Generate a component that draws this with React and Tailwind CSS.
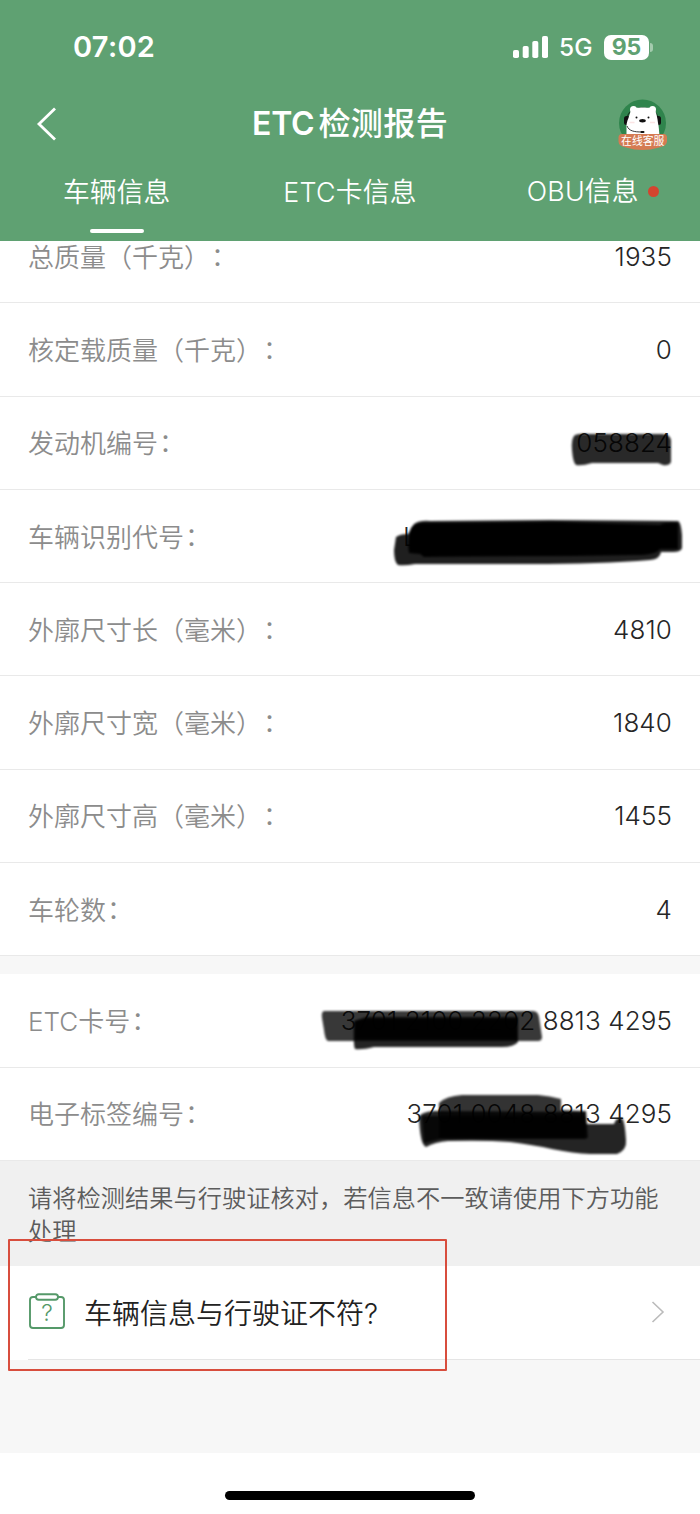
const vehicleRows = [
  { label: '总质量（千克）', value: '1935' },
  { label: '核定载质量（千克）', value: '0' },
  { label: '发动机编号', value: '058824' },
  { label: '车辆识别代号', value: 'L', valueClass: 'w-[269px]' },
  { label: '外廓尺寸长（毫米）', value: '4810' },
  { label: '外廓尺寸宽（毫米）', value: '1840' },
  { label: '外廓尺寸高（毫米）', value: '1455' },
  { label: '车轮数', value: '4' },
]

const cardRows = [
  { label: 'ETC卡号', value: '3701 2100 2202 8813 4295' },
  { label: '电子标签编号', value: '3701 0048 8813 4295' },
]

function StatusBar() {
  return (
    <div className="flex h-[94px] items-center justify-between pl-[73px] pr-[47px]">
      <span className="text-[29px] font-semibold tracking-[0.3px]">07:02</span>
      <div className="flex items-center">
        <svg width="36" height="24" viewBox="0 0 36 24" fill="#fff">
          <rect x="0" y="15" width="6" height="8" rx="1.8" />
          <rect x="9.7" y="11" width="6" height="12" rx="1.8" />
          <rect x="19.3" y="6" width="6" height="17" rx="1.8" />
          <rect x="29" y="1" width="6" height="22" rx="1.8" />
        </svg>
        <span className="ml-[10px] w-[35px] text-[24.5px] font-[450]">5G</span>
        <div className="ml-[10px] flex h-[25px] w-[45px] items-center justify-center rounded-[7px] bg-white text-[23px] font-bold text-[#5fa172]">
          95
        </div>
        <div className="ml-[1px] h-[9px] w-[3px] rounded-r-full bg-[#a4cbae]" />
      </div>
    </div>
  )
}

function ServiceBadge() {
  return (
    <svg className="mt-[2px]" width="50" height="54" viewBox="0 0 50 54">
      <circle cx="24.5" cy="25" r="23.5" fill="#2f844c" />
      <path d="M9 21C10 6 39 6 40 21" fill="none" stroke="#173a23" strokeWidth="1.2" />
      <rect x="6" y="18" width="6" height="9" rx="2.5" fill="#111" />
      <rect x="37" y="18" width="6" height="9" rx="2.5" fill="#111" />
      <circle cx="15.5" cy="11.5" r="3.5" fill="#fff" />
      <circle cx="34.5" cy="11.5" r="3.5" fill="#fff" />
      <path d="M13 12C15 8.500 35 8.500 37 12C38.500 16 39.500 20 40 25C41 29 41 33 41.500 38H8.500V31C8 27 9 23 10.500 20Z" fill="#fff" />
      <circle cx="18.5" cy="19.5" r="1" fill="#111" />
      <circle cx="30.5" cy="19.5" r="1" fill="#111" />
      <ellipse cx="24.5" cy="22.7" rx="3.3" ry="1.7" fill="#111" />
      <path d="M11.500 24.500h5M32 24.500h5" stroke="#fbe4e4" strokeWidth="1.6" />
      <path d="M9 28C11 33 16 34 24 34" fill="none" stroke="#222" strokeWidth="0.9" />
      <rect x="22.5" y="33" width="4" height="2" rx="1" fill="#111" />
      <path d="M4 36H45.500Q49 36 49 39.500V43.500Q48.500 48 41 49.500Q24.500 54.500 8 49.500Q0.500 48 0.500 43.500V39.500Q0.500 36 4 36Z" fill="#d57b53" />
      <text
        x="24.7"
        y="47.3"
        textAnchor="middle"
        fill="#fff"
        fontSize="10.8"
        fontFamily="Noto Sans CJK SC, sans-serif"
      >
        在线客服
      </text>
    </svg>
  )
}

function Header() {
  return (
    <header className="relative z-10 h-[241px] bg-[#5fa172] text-white">
      <StatusBar />
      <div className="flex h-[60px] items-center justify-between pl-[36px] pr-[32px]">
        <svg width="50" height="34" viewBox="0 0 50 34" fill="none" stroke="#fff" strokeWidth="2.8">
          <path d="M19 1.500L3 17L19 32.500" />
        </svg>
        <h1 className="mr-[4px] text-[32px] font-medium tracking-[0.4px]">
          <span className="mr-[4px] font-semibold tracking-[-0.2px]">ETC</span>检测报告
        </h1>
        <ServiceBadge />
      </div>
      <nav className="grid h-[87px] grid-cols-3 text-[26.8px] font-[350]">
        <div className="flex flex-col items-center">
          <span className="flex h-[75px] items-center pt-[2px]">车辆信息</span>
          <span className="h-1 w-[54px] rounded-full bg-white" />
        </div>
        <div className="flex h-[75px] items-center justify-center pt-[2px] tracking-[0.2px]">ETC卡信息</div>
        <div className="flex h-[75px] items-center justify-center gap-[9px] pl-[19px] tracking-[0.2px]">
          OBU信息
          <span className="size-[11px] rounded-full bg-[#d4442f]" />
        </div>
      </nav>
    </header>
  )
}

function InfoRow({ label, value, valueClass = '' }) {
  return (
    <div className="flex h-[93.3px] items-center justify-between border-b border-[#e9e9e9] bg-white px-7 pt-[2px] text-[26px]">
      <span className="font-[350] text-[#8c8c8c]">
        {label}
        <span className="relative -top-px left-px">：</span>
      </span>
      <span className={`mb-[2px] whitespace-nowrap font-[350] tracking-[0.1px] text-[#262626] ${valueClass}`}>{value}</span>
    </div>
  )
}

// Marker strokes over the private numbers
function Redactions() {
  return (
    <svg className="pointer-events-none absolute left-0 top-0 z-20" width="700" height="1514" viewBox="0 0 700 1514">
      <defs>
        <filter id="soft" x="-5%" y="-20%" width="110%" height="140%">
          <feGaussianBlur stdDeviation="0.9" />
        </filter>
      </defs>
      <g filter="url(#soft)" fill="#000">
        <path opacity="0.84" d="M575 435Q580 433 590 434H662Q670 434 671 440V462Q669 466 663 465L658 463H592Q582 466 576 465Q573 463 572 450Q571 438 575 435Z" />
        <path opacity="0.88" d="M396 537Q400 534 408 534L414 524Q420 520 430 521L550 520L678 521Q681 522 682 535V548Q681 552 673 552H661Q660 559 650 560Q600 564 530 564H415Q405 566 398 565Q394 562 394 550Z" />
        <path d="M411 528Q414 523 424 523L560 522L660 525Q664 522 678 523V549H660Q656 555 635 555L570 556Q480 556 424 557L420 554L409 553Q407 540 411 528Z" />
        <path opacity="0.78" d="M324 1011H533Q538 1011 539 1017L542 1037Q542 1041 538 1041H328Q325 1040 324 1030L322 1018Q321 1012 324 1011Z" />
        <path opacity="0.86" d="M354 1021L366 1017H518V1042Q514 1047 502 1047H374Q362 1050 355 1049Q353 1045 354 1021Z" />
        <path opacity="0.88" d="M355 1021L366 1019H517V1039H355Z" />
        <path opacity="0.8" d="M439 1103Q446 1096 462 1095H538Q550 1096 561 1099V1110L586 1111L588 1138H439Z" />
        <path opacity="0.86" d="M419 1117Q421 1112 434 1111L586 1112V1124H614Q616 1117 622 1118Q625 1122 626 1140Q627 1150 617 1154H590C568 1154 540 1145 510 1142Q485 1140 448 1141Q435 1142 426 1147Q420 1145 419 1117Z" />
        <path opacity="0.8" d="M422 1116H586V1139H440L424 1143Z" />
      </g>
    </svg>
  )
}

export default function App() {
  return (
    <div className="relative h-[1514px] w-[700px] overflow-hidden bg-white font-[Inter,'Noto_Sans_CJK_SC',sans-serif] [text-spacing-trim:space-all]">
      <Header />
      <main>
        <section className="-mt-[31px]">
          {vehicleRows.map((row) => (
            <InfoRow key={row.label} {...row} />
          ))}
        </section>
        <section className="border-t-[18px] border-[#f7f7f7]">
          {cardRows.map((row) => (
            <InfoRow key={row.label} {...row} />
          ))}
        </section>
        <p className="h-[105px] bg-[#f0f0f0] px-7 pt-[21px] text-[24.25px] font-[350] leading-[33px] text-[#5c5c5c]">
          请将检测结果与行驶证核对，若信息不一致请使用下方功能处理
        </p>
        <div className="flex h-[93px] items-center bg-white pl-7 pr-[35px]">
          <svg width="38" height="38" viewBox="0 0 38 38" fill="none" stroke="#559969" strokeWidth="1.9">
            <path d="M8 4H5Q2 4 2 7V32Q2 35 5 35H33Q36 35 36 32V7Q36 4 33 4H30" />
            <rect x="8" y="1.2" width="22" height="5.5" rx="2.7" />
            <text x="19" y="28" textAnchor="middle" fill="#559969" stroke="none" fontSize="23" fontWeight="300" fontFamily="Inter">
              ?
            </text>
          </svg>
          <span className="ml-[18px] mt-[4px] text-[28px] font-[350] text-[#222]">车辆信息与行驶证不符?</span>
          <svg className="ml-auto" width="14" height="22" viewBox="0 0 14 22" fill="none" stroke="#bbb" strokeWidth="1.6">
            <path d="M1.500 1L12 11L1.500 21" />
          </svg>
        </div>
        <div className="ml-7 h-px bg-[#e5e5e5]" />
        <div className="h-[93px] bg-[#f7f7f7]" />
        <div className="flex h-[61px] justify-center pt-[38px]">
          <div className="h-[9px] w-[250px] rounded-full bg-black" />
        </div>
      </main>
      <Redactions />
      <div className="pointer-events-none absolute left-[8px] top-[1239px] z-30 h-[132px] w-[439px] rounded-[1px] border-2 border-[#d84d3d]" />
    </div>
  )
}
